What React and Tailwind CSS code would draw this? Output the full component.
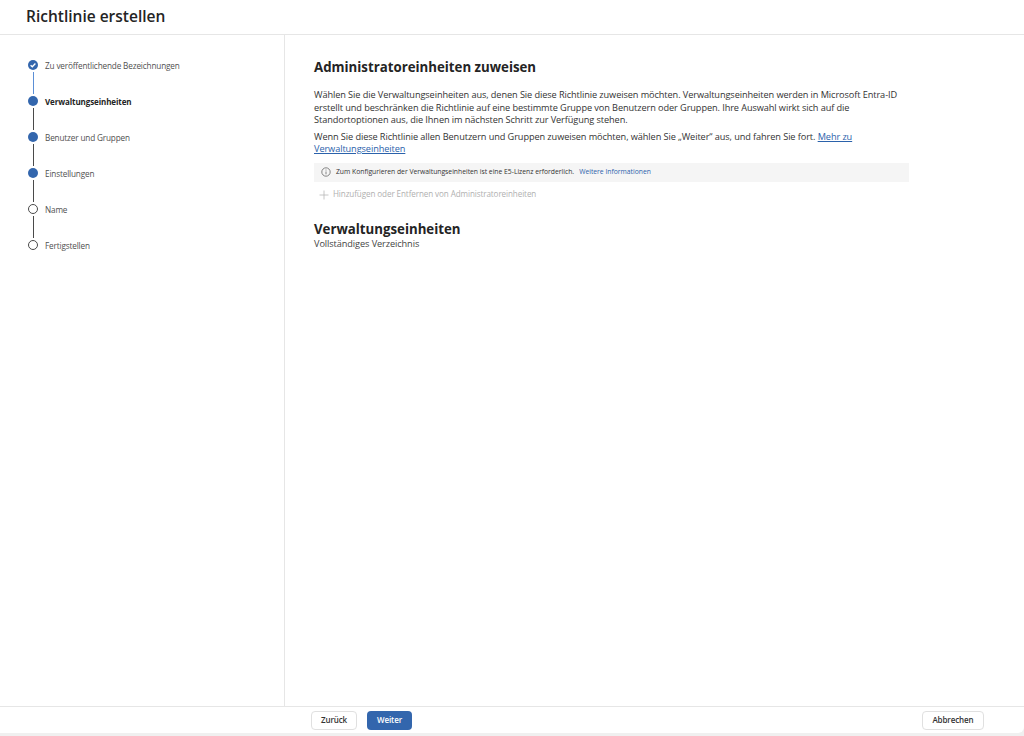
const steps = [
  { label: 'Zu veröffentlichende Bezeichnungen', state: 'done' },
  { label: 'Verwaltungseinheiten', state: 'current' },
  { label: 'Benutzer und Gruppen', state: 'filled' },
  { label: 'Einstellungen', state: 'filled' },
  { label: 'Name', state: 'open' },
  { label: 'Fertigstellen', state: 'open' },
]

function StepDot({ state }) {
  if (state === 'done') {
    return (
      <div className="w-[10px] h-[10px] rounded-full bg-[#3366ad] flex items-center justify-center">
        <svg viewBox="0 0 10 10" fill="none" stroke="white" strokeWidth="1.3" className="w-[10px] h-[10px]">
          <path d="M2.6 5.2 4.3 6.8 7.4 3.5" />
        </svg>
      </div>
    )
  }
  if (state === 'open') {
    return <div className="w-[10px] h-[10px] rounded-full border-[1.5px] border-[#4a4a4a] bg-white" />
  }
  return <div className="w-[10px] h-[10px] rounded-full bg-[#3366ad]" />
}

function Stepper() {
  return (
    <div className="flex flex-col pt-[25px] pl-[28px]">
      {steps.map((step, i) => (
        <div key={step.label} className="flex flex-col">
          <div className="flex items-center h-[10px] gap-[7px]">
            <StepDot state={step.state} />
            <span className={`pt-px leading-[10px] whitespace-nowrap ${step.state === 'current' ? 'text-[8px] tracking-[-0.1px] font-bold text-[#242424]' : 'text-[8.2px] tracking-[-0.15px] text-[#505050]'}`}>
              {step.label}
            </span>
          </div>
          {i < steps.length - 1 && (
            <div className={`w-px h-[22px] my-[2px] ml-[5px] ${i === 0 ? 'bg-[#5b8fd6]' : 'bg-[#4a4a4a]'}`} />
          )}
        </div>
      ))}
    </div>
  )
}

export default function App() {
  return (
    <div className="h-[736px] flex flex-col bg-[#f0f0f0] font-['Open_Sans',sans-serif] text-[#2b2b2b]">
      <div className="flex-1 flex flex-col bg-white rounded-br-md mb-[3px] overflow-hidden">
        <header className="h-[35px] border-b border-[#e6e6e6] pl-[26px] flex items-center shrink-0">
          <h1 className="text-[15.5px] leading-[20px] font-semibold text-[#242424] -mt-[3px]">Richtlinie erstellen</h1>
        </header>

        <div className="flex-1 flex min-h-0">
          <aside className="w-[285px] border-r border-[#e6e6e6] shrink-0">
            <Stepper />
          </aside>

          <main className="flex-1 pl-[29px] pt-[22px]">
            <h2 className="text-[13.25px] leading-[20px] font-bold text-[#242424]">Administratoreinheiten zuweisen</h2>
            <div className="w-[594px] mt-[12px] text-[9.2px] tracking-[-0.09px] leading-[12.5px] text-[#333]">
              <p>
                Wählen Sie die Verwaltungseinheiten aus, denen Sie diese Richtlinie zuweisen möchten. Verwaltungseinheiten werden in Microsoft Entra-ID erstellt und beschränken die Richtlinie auf eine bestimmte Gruppe von Benutzern oder Gruppen. Ihre Auswahl wirkt sich auf die Standortoptionen aus, die Ihnen im nächsten Schritt zur Verfügung stehen.
              </p>
              <p className="mt-[4px]">
                Wenn Sie diese Richtlinie allen Benutzern und Gruppen zuweisen möchten, wählen Sie „Weiter“ aus, und fahren Sie fort.{' '}
                <a className="text-[#2b62ab] underline">Mehr zu</a>{' '}
                <a className="text-[#2b62ab] underline">Verwaltungseinheiten</a>
              </p>
            </div>

            <div className="w-[595px] h-[19px] mt-[7px] bg-[#f5f5f5] flex items-center pl-[7px] gap-[5px] text-[6.77px] text-[#333]">
              <svg viewBox="0 0 10 10" fill="none" stroke="#555" strokeWidth="0.7" className="w-[10px] h-[10px] shrink-0">
                <circle cx="5" cy="5" r="4.2" />
                <path d="M5 4.5v2.8M5 2.6v.9" />
              </svg>
              <span className="pt-px whitespace-nowrap">Zum Konfigurieren der Verwaltungseinheiten ist eine E5-Lizenz erforderlich.</span>
              <a className="pt-px whitespace-nowrap text-[#2b62ab]">Weitere Informationen</a>
            </div>

            <div className="flex items-center h-[14px] mt-[6px] pl-[5px] gap-[4px] text-[8.1px] tracking-[-0.1px] text-[#b0b0b0]">
              <svg viewBox="0 0 10 10" fill="none" stroke="#b8b8b8" strokeWidth="0.8" className="w-[10px] h-[10px] shrink-0">
                <path d="M5 0.5v9M0.5 5h9" />
              </svg>
              <span className="whitespace-nowrap">Hinzufügen oder Entfernen von Administratoreinheiten</span>
            </div>

            <h2 className="mt-[18px] text-[13.25px] leading-[18px] font-bold text-[#242424]">Verwaltungseinheiten</h2>
            <p className="text-[9.2px] tracking-[-0.09px] leading-[12px] text-[#444]">Vollständiges Verzeichnis</p>
          </main>
        </div>

        <footer className="h-[27px] border-t border-[#e6e6e6] shrink-0 flex items-center pl-[311px] pr-[40px]">
          <div className="flex gap-[10px]">
            <button className="w-[46px] h-[19px] rounded-sm border border-[#e0e0e0] bg-white text-[8px] tracking-[-0.1px] font-semibold text-[#333]">Zurück</button>
            <button className="w-[45px] h-[19px] rounded-sm bg-[#3366ad] text-[8px] tracking-[-0.1px] font-semibold text-white">Weiter</button>
          </div>
          <button className="ml-auto w-[62px] h-[19px] rounded-sm border border-[#e0e0e0] bg-white text-[8px] tracking-[-0.1px] font-semibold text-[#333]">Abbrechen</button>
        </footer>
      </div>
    </div>
  )
}
